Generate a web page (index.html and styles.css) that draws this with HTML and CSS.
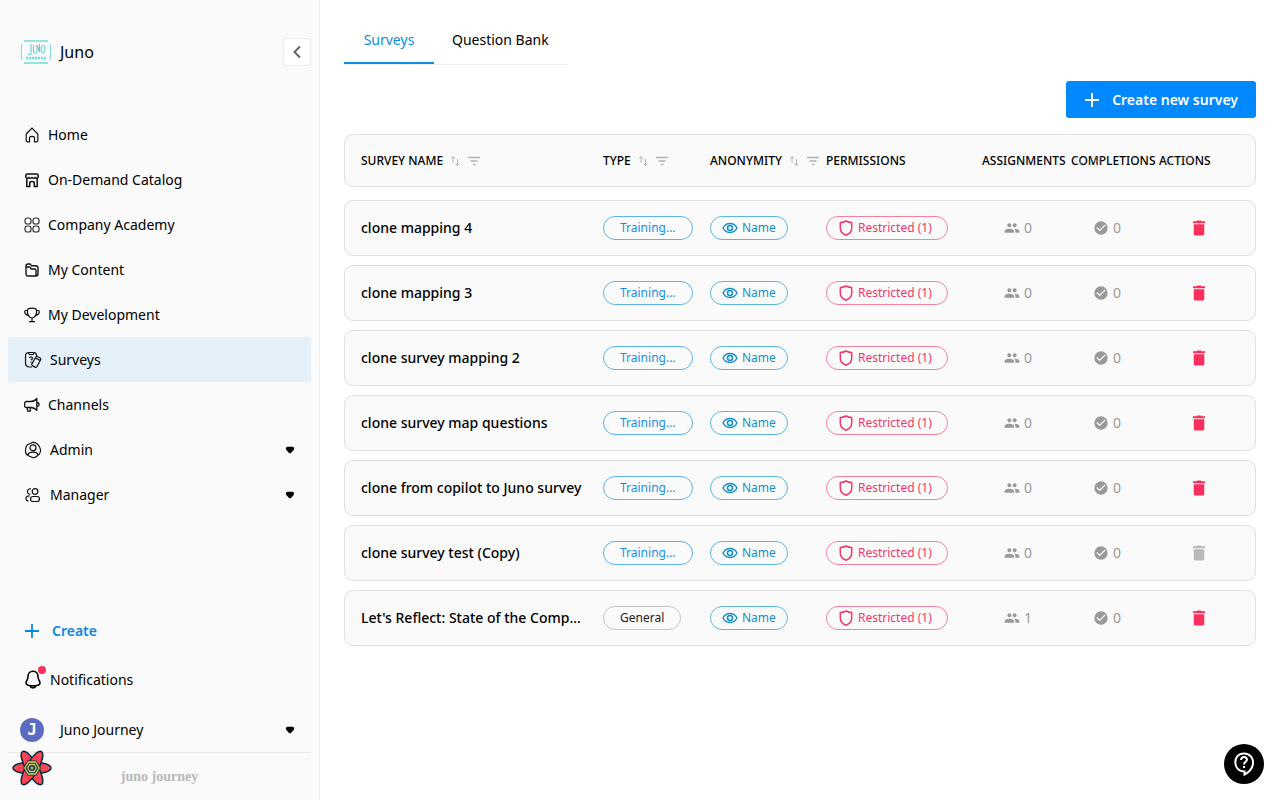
FILE: index.html
```
<!DOCTYPE html>
<html lang="en">
<head>
    <meta charset="UTF-8">
    <meta name="viewport" content="width=device-width, initial-scale=1.0">
    <title>Surveys</title>
    <link rel="stylesheet" href="styles.css">
</head>
<body>
    <!-- Shared icons -->
    <svg class="sprite" aria-hidden="true">
        <symbol id="caret" viewBox="0 0 10 8"><path d="M3 .8h4C9 .8 9.800 2.400 8.600 3.900L6.200 6.700Q5 8 3.800 6.700L1.400 3.900C.2 2.400 1 .8 3 .8z" fill="#000"/></symbol>
        <symbol id="sort" viewBox="0 0 10 12"><path d="M3 8V1.500M1 3.500l2-2 2 2M7.500 4v6.500M5.500 8.500l2 2 2-2" fill="none" stroke="#b4b4b4"/></symbol>
        <symbol id="filter" viewBox="0 0 12 12"><path d="M0 2.500h12M2.500 6h7M5 9.500h2.500" fill="none" stroke="#b4b4b4" stroke-width="1.300"/></symbol>
        <symbol id="eye" viewBox="0 0 16 16"><path d="M1 8c3-6 11-6 14 0-3 6-11 6-14 0z" fill="none" stroke="currentColor" stroke-width="1.400"/><circle cx="8" cy="8" r="2.500" fill="none" stroke="currentColor" stroke-width="1.500"/></symbol>
        <symbol id="shield" viewBox="0 0 16 16"><path d="M8 1c1.800 1 3.600 1.500 5.700 1.500V8c0 3.500-2.500 6-5.700 7.200C4.800 14 2.300 11.500 2.300 8V2.500C4.400 2.500 6.200 2 8 1z" fill="none" stroke="currentColor" stroke-width="1.500" stroke-linejoin="round"/></symbol>
        <symbol id="people" viewBox="0 0 24 24"><path d="M16 11c1.660 0 2.990-1.340 2.990-3S17.660 5 16 5s-3 1.340-3 3 1.340 3 3 3zm-8 0c1.660 0 2.990-1.340 2.990-3S9.660 5 8 5 5 6.340 5 8s1.340 3 3 3zm0 2c-2.330 0-7 1.170-7 3.500V19h14v-2.500C15 14.170 10.330 13 8 13zm8 0c-.29 0-.62.020-.97.050 1.160.84 1.970 1.970 1.970 3.450V19h6v-2.500c0-2.330-4.670-3.500-7-3.500z" fill="currentColor"/></symbol>
        <symbol id="check" viewBox="0 0 24 24"><path d="M12 2a10 10 0 1 0 0 20 10 10 0 0 0 0-20zm-2 15-5-5 1.400-1.400L10 14.200l7.600-7.600L19 8z" fill="currentColor"/></symbol>
        <symbol id="trash" viewBox="0 0 24 24"><path d="M5 19.500C5 21 6 22 7.500 22h9c1.500 0 2.500-1 2.500-2.500V7H5zM20 3h-4.500l-1-1h-5l-1 1H4v2.500h16z" fill="currentColor"/></symbol>
    </svg>

    <div class="page">
        <aside class="sidebar">
            <div class="brand">
                <svg class="brand-logo" viewBox="0 0 32 24" fill="none" stroke="#6fe0dc">
                    <path d="M4 1h24M4 23h24" stroke-width="1.500"/>
                    <path d="M2 4Q.3 12 2 20M30 4Q31.700 12 30 20"/>
                    <path d="M11 4v9q0 2-3 1.500M13.500 5v6q0 2.500 2 2.500t1.500-3V5l2.500 7V4M23 5q-2 0-2 4t2 4 2-4-2-4" stroke="#5cc9cf"/>
                    <path d="M6 18h20" stroke-width="2.500" stroke-dasharray="2 1"/>
                </svg>
                <span class="brand-name">Juno</span>
                <button class="collapse" aria-label="Collapse menu">
                    <svg width="10" height="14" viewBox="0 0 10 14"><path d="M8 1.500 2.500 7 8 12.500" fill="none" stroke="#666" stroke-width="2"/></svg>
                </button>
            </div>

            <nav class="menu">
                <a href="#" class="menu-item">
                    <svg width="16" height="16" viewBox="0 0 16 16"><path d="M2.200 7 8 1.200 13.800 7v6.500q0 1.300-1.300 1.300h-2V11Q10.500 9.300 8 9.300T5.500 11v3.800h-2q-1.300 0-1.300-1.300z"/></svg>
                    <span>Home</span>
                </a>
                <a href="#" class="menu-item">
                    <svg width="16" height="16" viewBox="0 0 16 16"><path stroke-width="1.500" d="M3.500 2h9q1.700 0 1.700 1.500v1.700Q13 7 11.200 5.500 10 7 8 5.500 6 7 4.800 5.500 3 7 1.800 5.200V3.500Q1.800 2 3.500 2zM2.800 6.500v8h2.900v-3.300q0-1.700 2.300-1.700t2.300 1.700v3.300h2.900v-8"/></svg>
                    <span>On-Demand Catalog</span>
                </a>
                <a href="#" class="menu-item">
                    <svg width="16" height="16" viewBox="0 0 16 16"><g stroke="#333"><rect x="1" y="1" width="6" height="6" rx="2.300"/><rect x="9" y="1" width="6" height="6" rx="2.300"/><rect x="1" y="9" width="6" height="6" rx="2.300"/><rect x="9" y="9" width="6" height="6" rx="2.300"/></g></svg>
                    <span>Company Academy</span>
                </a>
                <a href="#" class="menu-item">
                    <svg width="16" height="16" viewBox="0 0 16 16"><path stroke-width="1.400" d="M4.500 14H4.300Q2 14 2 11.700V4.200Q2 2 4 2h1.500q1 0 1.500 1l.5.800h4.200q2.300 0 2.300 2.200v5.700q0 2.300-2.300 2.300H4.500M2.500 5h2.700q.8 0 1.300 1l.7 1h3.300q1.500 0 1.500 1.500v5"/></svg>
                    <span>My Content</span>
                </a>
                <a href="#" class="menu-item">
                    <svg width="16" height="16" viewBox="0 0 16 16"><path d="M4 1.700Q8 .5 12 1.700q1.300 4-.5 7Q10 11 8 11T4.500 8.700Q2.700 5.700 4 1.700zM3.500 3.500H2Q.3 3.500.8 5.500T4 8.500M12.500 3.500H14q1.700 0 1.200 2T12 8.500M8 11v3.500M5 14.700h6"/></svg>
                    <span>My Development</span>
                </a>
                <a href="#" class="menu-item active">
                    <svg width="18" height="18" viewBox="0 0 18 18"><path d="M8 16H5q-3.500-.5-3.500-4.500V5Q1.500 1.500 5 1.500h5q2.500 0 2.500 3M4.500 1.700l.8 1.800h4l.8-1.800M5.500 7Q6 5.500 7.500 6t.7 2L7 9M7 10.500v1M12.500 5l3.300 1.700q1.500.8.700 2.300l-3.300 6.300q-.8 1.500-2.300.8l-2.200-1.200q-1.500-.8-.7-2.300zM11.500 7l4.500 2.400"/></svg>
                    <span>Surveys</span>
                </a>
                <a href="#" class="menu-item">
                    <svg width="16" height="16" viewBox="0 0 16 16"><path stroke-width="1.300" stroke-linejoin="round" d="M12.800 1.500v11.800Q10.500 10.500 7 10.500H2.500Q.7 10.500.7 9V6q0-1.500 1.800-1.500H7q3.500 0 5.800-3zM13 5.500q2.200.3 2.200 2T13 9.500M3 10.700l.7 3.500h2.600v-3.500"/></svg>
                    <span>Channels</span>
                </a>
                <a href="#" class="menu-item">
                    <svg width="18" height="18" viewBox="0 0 18 18"><path d="M9 1.200q2 0 4.500 2t3 5.500-3 6-4.500 2-4.500-2-3-6 3-5.500 4.500-2zM4 14q.7-2.800 5-2.800t5 2.800"/><circle cx="9" cy="6.800" r="3"/></svg>
                    <span>Admin</span>
                    <svg class="caret"><use href="#caret"/></svg>
                </a>
                <a href="#" class="menu-item">
                    <svg width="18" height="18" viewBox="0 0 18 18"><circle cx="11" cy="5.500" r="2.800"/><rect x="6.500" y="10.500" width="9" height="5" rx="2.500"/><path d="M7 3Q3.500 2.500 3.500 5.500T6.500 8M5.500 9.800Q2 10 2 12.500T4.500 15"/></svg>
                    <span>Manager</span>
                    <svg class="caret"><use href="#caret"/></svg>
                </a>
            </nav>

            <div class="bottom">
                <a href="#" class="create-link">
                    <svg width="16" height="16" viewBox="0 0 16 16"><path d="M8 1v14M1 8h14" stroke="currentColor" stroke-width="1.800"/></svg>
                    <span>Create</span>
                </a>
                <a href="#" class="notifications">
                    <span class="bell">
                        <svg width="18" height="20" viewBox="0 0 18 20" fill="none" stroke="#000" stroke-width="1.600"><path d="M9 1.200C5.800 1.200 4 3.500 4 6.500 4 10 2 10.500 2 13c0 2 2.500 2.800 7 2.800s7-.8 7-2.800c0-2.500-2-3-2-6.500 0-3-1.800-5.300-5-5.300zM6 16c1 2.500 5 2.500 6 0"/></svg>
                        <span class="dot"></span>
                    </span>
                    <span>Notifications</span>
                </a>
                <a href="#" class="profile">
                    <span class="avatar">J</span>
                    <span>Juno Journey</span>
                    <svg class="caret"><use href="#caret"/></svg>
                </a>
                <div class="sidebar-footer">juno journey</div>
            </div>
        </aside>

        <main class="content">
            <div class="tabs">
                <a href="#" class="tab selected">Surveys</a>
                <a href="#" class="tab">Question Bank</a>
            </div>

            <div class="toolbar">
                <button class="create-btn">
                    <svg width="16" height="16" viewBox="0 0 16 16"><path d="M8 1v14M1 8h14" stroke="#fff" stroke-width="2"/></svg>
                    <span>Create new survey</span>
                </button>
            </div>

            <table class="surveys">
                <thead>
                    <tr>
                        <th>SURVEY NAME <svg class="sort"><use href="#sort"/></svg><svg class="filter"><use href="#filter"/></svg></th>
                        <th>TYPE <svg class="sort"><use href="#sort"/></svg><svg class="filter"><use href="#filter"/></svg></th>
                        <th>ANONYMITY <svg class="sort"><use href="#sort"/></svg><svg class="filter"><use href="#filter"/></svg></th>
                        <th>PERMISSIONS</th>
                        <th class="faded">ASSIGNMENTS <svg class="sort"><use href="#sort"/></svg><svg class="filter"><use href="#filter"/></svg></th>
                        <th class="faded">COMPLETIONS <svg class="sort"><use href="#sort"/></svg><svg class="filter"><use href="#filter"/></svg></th>
                        <th>ACTIONS</th>
                    </tr>
                </thead>
                <tbody>
                    <tr>
                        <td class="name">clone mapping 4</td>
                        <td><span class="pill training">Training...</span></td>
                        <td><span class="pill anonymity"><svg><use href="#eye"/></svg>Name</span></td>
                        <td><span class="pill restricted"><svg><use href="#shield"/></svg>Restricted (1)</span></td>
                        <td class="count"><svg><use href="#people"/></svg>0</td>
                        <td class="count"><svg><use href="#check"/></svg>0</td>
                        <td class="action"><button class="delete" aria-label="Delete"><svg><use href="#trash"/></svg></button></td>
                    </tr>
                    <tr>
                        <td class="name">clone mapping 3</td>
                        <td><span class="pill training">Training...</span></td>
                        <td><span class="pill anonymity"><svg><use href="#eye"/></svg>Name</span></td>
                        <td><span class="pill restricted"><svg><use href="#shield"/></svg>Restricted (1)</span></td>
                        <td class="count"><svg><use href="#people"/></svg>0</td>
                        <td class="count"><svg><use href="#check"/></svg>0</td>
                        <td class="action"><button class="delete" aria-label="Delete"><svg><use href="#trash"/></svg></button></td>
                    </tr>
                    <tr>
                        <td class="name">clone survey mapping 2</td>
                        <td><span class="pill training">Training...</span></td>
                        <td><span class="pill anonymity"><svg><use href="#eye"/></svg>Name</span></td>
                        <td><span class="pill restricted"><svg><use href="#shield"/></svg>Restricted (1)</span></td>
                        <td class="count"><svg><use href="#people"/></svg>0</td>
                        <td class="count"><svg><use href="#check"/></svg>0</td>
                        <td class="action"><button class="delete" aria-label="Delete"><svg><use href="#trash"/></svg></button></td>
                    </tr>
                    <tr>
                        <td class="name">clone survey map questions</td>
                        <td><span class="pill training">Training...</span></td>
                        <td><span class="pill anonymity"><svg><use href="#eye"/></svg>Name</span></td>
                        <td><span class="pill restricted"><svg><use href="#shield"/></svg>Restricted (1)</span></td>
                        <td class="count"><svg><use href="#people"/></svg>0</td>
                        <td class="count"><svg><use href="#check"/></svg>0</td>
                        <td class="action"><button class="delete" aria-label="Delete"><svg><use href="#trash"/></svg></button></td>
                    </tr>
                    <tr>
                        <td class="name">clone from copilot to Juno survey</td>
                        <td><span class="pill training">Training...</span></td>
                        <td><span class="pill anonymity"><svg><use href="#eye"/></svg>Name</span></td>
                        <td><span class="pill restricted"><svg><use href="#shield"/></svg>Restricted (1)</span></td>
                        <td class="count"><svg><use href="#people"/></svg>0</td>
                        <td class="count"><svg><use href="#check"/></svg>0</td>
                        <td class="action"><button class="delete" aria-label="Delete"><svg><use href="#trash"/></svg></button></td>
                    </tr>
                    <tr>
                        <td class="name">clone survey test (Copy)</td>
                        <td><span class="pill training">Training...</span></td>
                        <td><span class="pill anonymity"><svg><use href="#eye"/></svg>Name</span></td>
                        <td><span class="pill restricted"><svg><use href="#shield"/></svg>Restricted (1)</span></td>
                        <td class="count"><svg><use href="#people"/></svg>0</td>
                        <td class="count"><svg><use href="#check"/></svg>0</td>
                        <td class="action"><button class="delete" aria-label="Delete" disabled><svg><use href="#trash"/></svg></button></td>
                    </tr>
                    <tr>
                        <td class="name">Let's Reflect: State of the Comp...</td>
                        <td><span class="pill general">General</span></td>
                        <td><span class="pill anonymity"><svg><use href="#eye"/></svg>Name</span></td>
                        <td><span class="pill restricted"><svg><use href="#shield"/></svg>Restricted (1)</span></td>
                        <td class="count"><svg><use href="#people"/></svg>1</td>
                        <td class="count"><svg><use href="#check"/></svg>0</td>
                        <td class="action"><button class="delete" aria-label="Delete"><svg><use href="#trash"/></svg></button></td>
                    </tr>
                </tbody>
            </table>
        </main>
    </div>

    <!-- Floating buttons -->
    <button class="devtools" aria-label="Open devtools">
        <svg width="40" height="36" viewBox="0 0 40 36">
            <g fill="#ff4154" stroke="#00303f" stroke-width="1.500">
                <ellipse cx="20" cy="18" rx="19" ry="6"/>
                <ellipse cx="20" cy="18" rx="19" ry="6" transform="rotate(60 20 18)"/>
                <ellipse cx="20" cy="18" rx="19" ry="6" transform="rotate(120 20 18)"/>
            </g>
            <path d="M15.500 10.500h9l4.300 7.500-4.300 7.500h-9L11.200 18z" fill="#00303f"/>
            <path d="M16.400 12h7.200l3.500 6-3.500 6h-7.200l-3.500-6zM17.800 14.500h4.400l2 3.500-2 3.500h-4.400l-2-3.500z" fill="none" stroke="#e0d060" stroke-width="1.300"/>
            <circle cx="20" cy="18" r="1.500" fill="#b8c46c"/>
        </svg>
    </button>
    <button class="help" aria-label="Help">
        <svg width="24" height="26" viewBox="0 0 24 26" fill="none" stroke="#fff" stroke-width="2">
            <path d="M12.500 20.500v3q7-3.500 8.300-9.500C22 7 18 2.500 12 2.500S3.300 6.500 3.300 11.500s3.500 9 9.200 9z"/>
            <path d="M9 9q.3-3 3-3t3 2.500c0 2-3 2.500-3 5M12 15v2"/>
        </svg>
    </button>
</body>
</html>
```
FILE: styles.css
```
* {
    box-sizing: border-box;
}

body {
    margin: 0;
    font-family: "Noto Sans", "Open Sans", sans-serif;
    font-size: 14px;
    line-height: 20px;
    color: #000;
    background-color: #fff;
}

a {
    color: inherit;
    text-decoration: none;
}

button {
    font-family: inherit;
    padding: 0;
    border: none;
    cursor: pointer;
}

.sprite {
    display: none;
}

.page {
    display: flex;
    min-height: 100vh;
}

/* Sidebar */
.sidebar {
    display: flex;
    flex-direction: column;
    flex: 0 0 320px;
    padding: 0 8px;
    background-color: #fafafa;
    border-right: 1px solid #eee;
}

.brand {
    display: flex;
    align-items: center;
    gap: 8px;
    height: 104px;
    padding-left: 12px;
}

.brand-logo {
    width: 32px;
    height: 24px;
}

.brand-name {
    flex: 1;
    font-size: 16px;
}

.collapse {
    display: flex;
    align-items: center;
    justify-content: center;
    width: 28px;
    height: 28px;
    background-color: #fff;
    border: 1px solid #eaeaea;
    border-radius: 3px;
}

.menu {
    margin-top: 8px;
}

.menu-item {
    display: flex;
    align-items: center;
    gap: 8px;
    height: 45px;
    padding: 0 16px;
    fill: none;
    stroke: #111;
    stroke-width: 1.2;
}

.menu-item.active {
    background-color: #e5f1fa;
    border-radius: 2px;
}

.caret {
    width: 10px;
    height: 8px;
    margin-left: auto;
    stroke: none;
}

.bottom {
    margin-top: auto;
}

.create-link,
.notifications,
.profile {
    display: flex;
    align-items: center;
    height: 49px;
    padding: 0 16px;
}

.create-link {
    gap: 12px;
    color: #0a87dc;
    font-weight: 600;
}

.notifications {
    gap: 8px;
}

.bell {
    position: relative;
    display: flex;
}

.dot {
    position: absolute;
    top: -4px;
    right: -4px;
    width: 8px;
    height: 8px;
    border-radius: 50%;
    background-color: #fa2f5b;
}

.profile {
    gap: 16px;
    padding: 4px 16px 0 12px;
    height: 48px;
}

.avatar {
    width: 24px;
    height: 24px;
    border-radius: 50%;
    background-color: #5c6bc0;
    color: #fff;
    font-family: "DejaVu Sans Mono", monospace;
    font-size: 16px;
    font-weight: bold;
    line-height: 24px;
    text-align: center;
}

.sidebar-footer {
    height: 48px;
    border-top: 1px solid #eaeaea;
    color: #b8b8b8;
    font-family: "Liberation Serif", serif;
    font-size: 14px;
    font-weight: bold;
    line-height: 48px;
    text-align: center;
}

/* Main area */
.content {
    flex: 1;
    min-width: 0;
    padding: 16px 24px;
}

.tabs {
    display: flex;
    width: max-content;
    border-bottom: 1px solid #eee;
}

.tab {
    min-width: 90px;
    height: 48px;
    padding: 0 18px;
    line-height: 48px;
    text-align: center;
}

.tab.selected {
    color: #0a8fe4;
    border-bottom: 2px solid #0a8fe4;
}

.toolbar {
    display: flex;
    justify-content: flex-end;
    margin: 16px 0;
}

.create-btn {
    display: flex;
    align-items: center;
    gap: 12px;
    height: 37px;
    padding: 0 18px;
    border-radius: 3px;
    background-color: #0088ff;
    color: #fff;
    font-size: 14px;
    font-weight: 600;
}

/* Surveys table, every row is its own card */
.surveys,
.surveys thead {
    display: block;
}

.surveys tbody {
    display: grid;
    gap: 9px;
    margin-top: 13px;
}

.surveys tr {
    display: grid;
    grid-template-columns: 242fr 107fr 116fr 156fr 89fr 88fr 80fr;
    align-items: center;
    height: 56px;
    padding: 0 16px;
    background-color: #fafafa;
    border: 1px solid #e0e0e0;
    border-radius: 9px;
}

.surveys thead tr {
    height: 53px;
}

.surveys th,
.surveys td {
    display: flex;
    align-items: center;
    min-width: 0;
    padding: 0;
    white-space: nowrap;
}

.surveys th {
    font-size: 12px;
    font-weight: 500;
}

.sort {
    flex: none;
    width: 10px;
    height: 12px;
    margin: 0 8px 0 7px;
}

.filter {
    flex: none;
    width: 12px;
    height: 12px;
}

.faded svg {
    opacity: 0.4;
}

.surveys .name {
    font-weight: 500;
}

.pill {
    display: flex;
    align-items: center;
    gap: 4px;
    height: 24px;
    padding: 0 11px;
    border: 1px solid;
    border-radius: 12px;
    font-size: 12px;
}

.pill svg {
    width: 16px;
    height: 16px;
}

.training,
.general {
    padding: 0 16px;
}

.training {
    color: #1690e6;
    border-color: #5db4e8;
}

.general {
    color: #222;
    border-color: #c4c4c4;
}

.anonymity {
    color: #1590c2;
    border-color: #5cb8da;
}

.restricted {
    padding-right: 15px;
    color: #f0386a;
    border-color: #f7809c;
}

.surveys .count {
    gap: 4px;
    padding-left: 22px;
    color: #999;
}

.count svg {
    width: 16px;
    height: 16px;
}

.surveys .action {
    padding-left: 31px;
}

.delete {
    display: flex;
    background: none;
    color: #fa2f5b;
}

.delete svg {
    width: 18px;
    height: 18px;
}

.delete:disabled {
    color: #b8b8b8;
    cursor: default;
}

/* Floating buttons */
.devtools {
    position: fixed;
    left: 12px;
    bottom: 14px;
    display: flex;
    background: none;
}

.help {
    position: fixed;
    right: 16px;
    bottom: 16px;
    display: flex;
    align-items: center;
    justify-content: center;
    width: 40px;
    height: 40px;
    border-radius: 50%;
    background-color: #000;
}
```
